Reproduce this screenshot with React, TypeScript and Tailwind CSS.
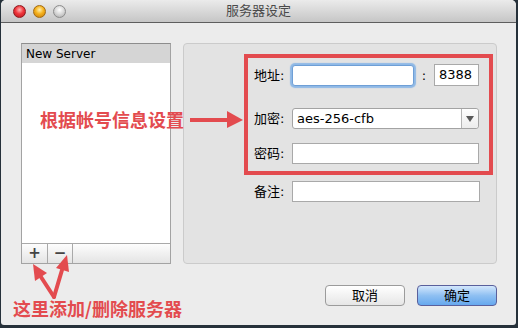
import React from "react"

const font = "font-['DejaVu_Sans','Noto_Sans_CJK_SC',sans-serif]"

function Light({ color }: { color: "red" | "yellow" | "gray" }) {
  const cls =
    color === "red"
      ? "bg-[radial-gradient(circle_at_50%_35%,#ffb3b3_0%,#f0363c_45%,#b3141b_100%)] border-[#8e1a1f]"
      : color === "yellow"
        ? "bg-[radial-gradient(circle_at_50%_35%,#fff0b0_0%,#f5b21d_45%,#c4780a_100%)] border-[#a16a12]"
        : "bg-[radial-gradient(circle_at_50%_35%,#ffffff_0%,#d6d6d6_50%,#a8a8a8_100%)] border-[#8c8c8c]"
  return <div className={`w-[13px] h-[13px] rounded-full border ${cls}`} />
}

function Label({ children }: { children: React.ReactNode }) {
  return <div className="w-[38px] text-[13px] text-black leading-none">{children}</div>
}

export default function App() {
  return (
    <div className={`w-[518px] h-[328px] bg-[#26313a] relative overflow-hidden ${font}`}>
      <div className="ml-[1px] w-[515px] h-[325px] bg-[#ececec] rounded-t-[5px] rounded-b-[3px] overflow-hidden flex flex-col">
        {/* title bar */}
        <div className="h-[23px] shrink-0 relative flex items-center bg-gradient-to-b from-[#ebebeb] to-[#c6c6c6] border-b border-[#5e5e5e]">
          <div className="flex items-center gap-[7px] pl-[12px]">
            <Light color="red" />
            <Light color="yellow" />
            <Light color="gray" />
          </div>
          <div className="absolute inset-0 flex items-center justify-center text-[13px] text-[#4a4a4a]">服务器设定</div>
        </div>

        {/* body */}
        <div className="flex-1 pt-[20px] pl-[20px] pr-[19px] flex flex-col">
          <div className="flex gap-[12px] h-[221px]">
            {/* server list */}
            <div className="w-[150px] flex flex-col border border-[#a3a3a3] border-t-[#8d8d8d] bg-white">
              <div className="flex-1">
                <div className="h-[19px] bg-[#d5d5d5] flex items-center pl-[4px] text-[12px] text-black">New Server</div>
              </div>
              <div className="h-[20px] flex border-t border-[#a9a9a9] bg-gradient-to-b from-[#fdfdfd] to-[#e4e4e4]">
                <div className="w-[26px] border-r border-[#a9a9a9] flex items-center justify-center text-[15px] font-bold text-[#444] leading-none">+</div>
                <div className="w-[25px] border-r border-[#a9a9a9] flex items-center justify-center text-[15px] font-bold text-[#444] leading-none">−</div>
                <div className="flex-1" />
              </div>
            </div>

            {/* settings panel */}
            <div className="w-[314px] bg-[#e3e3e3] border border-[#cbcbcb] rounded-[4px] pt-[10px] pl-[60px] flex flex-col">
              <div className="w-[249px] border-[4px] border-[#e34b4f] pl-[6px] pt-[6px] pb-[7px] flex flex-col">
                <div className="h-[22px] flex items-center">
                  <Label>地址:</Label>
                  <div className="w-[122px] h-[21px] bg-white rounded-[3px] border border-[#6f9fd6] shadow-[0_0_1px_2px_#8fb9e6]" />
                  <div className="w-[20px] text-center text-[13px] leading-none">:</div>
                  <div className="w-[45px] h-[22px] bg-white border border-[#a9a9a9] flex items-center pl-[4px] text-[13px]">8388</div>
                </div>
                <div className="h-[21px] mt-[22px] flex items-center">
                  <Label>加密:</Label>
                  <div className="w-[187px] h-[21px] bg-white border border-[#a3a3a3] rounded-[3px] flex items-center">
                    <div className="flex-1 pl-[4px] text-[13px]">aes-256-cfb</div>
                    <div className="w-[17px] h-full border-l border-[#b5b5b5] bg-gradient-to-b from-[#ffffff] to-[#ececec] rounded-r-[3px] flex items-center justify-center">
                      <div className="w-0 h-0 border-l-[4px] border-r-[4px] border-t-[6px] border-l-transparent border-r-transparent border-t-[#5a5a5a]" />
                    </div>
                  </div>
                </div>
                <div className="h-[21px] mt-[14px] flex items-center">
                  <Label>密码:</Label>
                  <div className="w-[187px] h-[21px] bg-white border border-[#a9a9a9]" />
                </div>
              </div>
              <div className="h-[21px] mt-[6px] ml-[10px] flex items-center">
                <Label>备注:</Label>
                <div className="w-[188px] h-[21px] bg-white border border-[#a9a9a9]" />
              </div>
            </div>
          </div>

          {/* dialog buttons */}
          <div className="mt-[21px] flex justify-end gap-[12px]">
            <div className="w-[80px] h-[21px] rounded-[4px] border border-[#9b9b9b] bg-gradient-to-b from-[#ffffff] to-[#e6e6e6] flex items-center justify-center text-[13px] text-black">取消</div>
            <div className="w-[80px] h-[21px] rounded-[4px] border border-[#5a609c] bg-gradient-to-b from-[#d3e7fc] via-[#8fc0f2] to-[#65a8ee] flex items-center justify-center text-[13px] text-black">确定</div>
          </div>
        </div>
      </div>

      {/* annotations */}
      <div className="absolute left-[40px] top-[110px] text-[18px] font-bold leading-none text-[#e34b4f] font-['Noto_Sans_CJK_SC',sans-serif]">根据帐号信息设置</div>
      <div className="absolute left-[13px] top-[299px] text-[18px] font-bold leading-none text-[#e34b4f] font-['Noto_Sans_CJK_SC',sans-serif]">这里添加/删除服务器</div>
      <svg className="absolute left-0 top-0" width="518" height="328" viewBox="0 0 518 328">
        <line x1="190" y1="120" x2="229" y2="120" stroke="#e34b4f" strokeWidth="4" />
        <polygon points="243,120 227,111 227,128" fill="#e34b4f" />
        <line x1="54" y1="297" x2="41" y2="277" stroke="#e34b4f" strokeWidth="4" strokeLinecap="round" />
        <polygon points="33,264 47,273 35,281" fill="#e34b4f" />
        <line x1="54" y1="297" x2="62" y2="270" stroke="#e34b4f" strokeWidth="4" strokeLinecap="round" />
        <polygon points="67,255 69,272 56,268" fill="#e34b4f" />
      </svg>
    </div>
  )
}
